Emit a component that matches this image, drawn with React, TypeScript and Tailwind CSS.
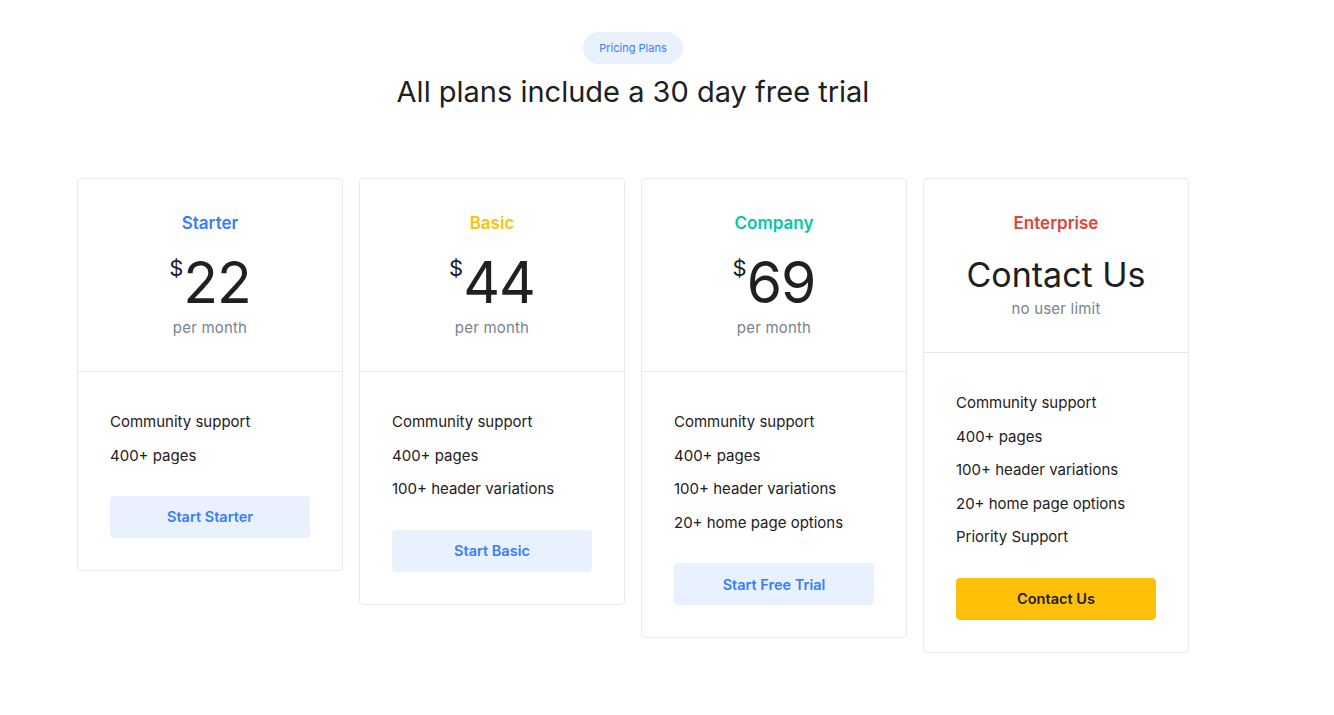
import React from "react";

type Plan = {
  name: string;
  nameColor: string;
  price?: string;
  sub: string;
  features: string[];
  button: string;
  primary?: boolean;
};

const plans: Plan[] = [
  {
    name: "Starter",
    nameColor: "text-[#377dff]",
    price: "22",
    sub: "per month",
    features: ["Community support", "400+ pages"],
    button: "Start Starter",
  },
  {
    name: "Basic",
    nameColor: "text-[#ffc107]",
    price: "44",
    sub: "per month",
    features: ["Community support", "400+ pages", "100+ header variations"],
    button: "Start Basic",
  },
  {
    name: "Company",
    nameColor: "text-[#00c9a7]",
    price: "69",
    sub: "per month",
    features: [
      "Community support",
      "400+ pages",
      "100+ header variations",
      "20+ home page options",
    ],
    button: "Start Free Trial",
  },
  {
    name: "Enterprise",
    nameColor: "text-[#de4437]",
    sub: "no user limit",
    features: [
      "Community support",
      "400+ pages",
      "100+ header variations",
      "20+ home page options",
      "Priority Support",
    ],
    button: "Contact Us",
    primary: true,
  },
];

function Card({ plan }: { plan: Plan }) {
  return (
    <div className="w-[266px] self-start rounded-[4px] border border-[#e7eaf3] bg-white">
      <div className="border-b border-[#e7eaf3] px-8 pt-8 pb-[33px] text-center">
        <div className={`text-[17px] font-semibold leading-6 ${plan.nameColor}`}>{plan.name}</div>
        {plan.price ? (
          <div className="mt-[18px] flex justify-center text-[#1e2022]">
            <span className="mt-[4px] text-[22px] leading-none">$</span>
            <span className="text-[57px] font-normal leading-[60px] tracking-[-1px]">{plan.price}</span>
          </div>
        ) : (
          <div className="mt-[21px] text-[34px] leading-[38px] text-[#1e2022]">Contact Us</div>
        )}
        <div className="mt-[5px] text-[15px] leading-5 tracking-[0.2px] text-[#77838f]">{plan.sub}</div>
      </div>
      <div className="px-8 pt-[33px] pb-8">
        <ul>
          {plan.features.map((f) => (
            <li key={f} className="text-[15px] leading-[33.6px] text-[#1e2022]">
              {f}
            </li>
          ))}
        </ul>
        <button
          className={`mt-6 h-[42px] w-[200px] rounded-[4px] text-[14.5px] font-semibold ${
            plan.primary ? "bg-[#ffc107] text-[#1e2022]" : "bg-[#e9f1ff] text-[#377dff]"
          }`}
        >
          {plan.button}
        </button>
      </div>
    </div>
  );
}

export default function App() {
  return (
    <div className="min-h-[715px] bg-white font-['Inter',sans-serif] antialiased">
      <div className="ml-[77px] w-[1112px] pt-8">
        <div className="flex flex-col items-center">
          <div className="flex h-8 w-[100px] items-center justify-center rounded-full bg-[#e9f1ff] text-[11px] text-[#377dff]">
            Pricing Plans
          </div>
          <h1 className="mt-[10px] text-[29px] font-normal leading-9 text-[#1e2022]">
            All plans include a 30 day free trial
          </h1>
        </div>
        <div className="mt-[68px] flex items-start gap-4">
          {plans.map((p) => (
            <Card key={p.name} plan={p} />
          ))}
        </div>
      </div>
    </div>
  );
}
